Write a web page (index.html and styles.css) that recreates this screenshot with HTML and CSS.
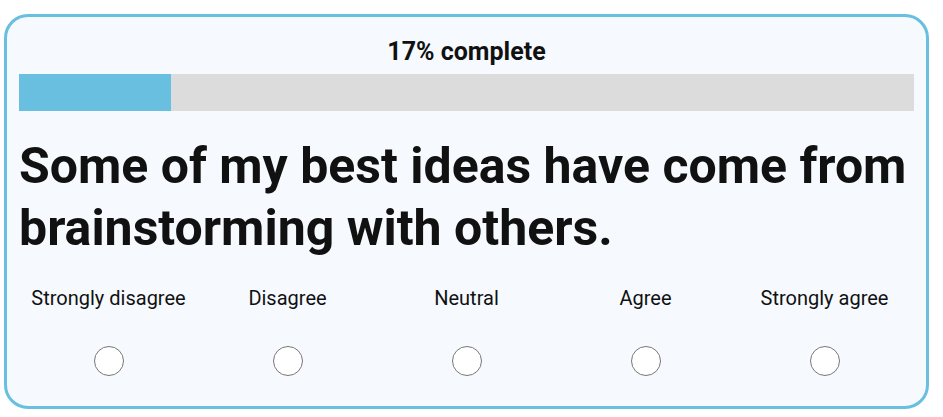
FILE: index.html
```html
<!DOCTYPE html>
<html lang="en">
<head>
  <meta charset="UTF-8">
  <meta name="viewport" content="width=device-width, initial-scale=1.0">
  <title>Survey</title>
  <link rel="stylesheet" href="styles.css">
</head>
<body>
  <div class="page">
    <div class="card">
      <!-- Progress -->
      <div class="progress-label">17% complete</div>
      <div class="progress">
        <div class="progress-fill" style="width: 17%"></div>
      </div>

      <!-- Question -->
      <h1 class="question">Some of my best ideas have come from brainstorming with others.</h1>

      <!-- Answers -->
      <div class="scale">
        <label class="option">
          <span>Strongly disagree</span>
          <input type="radio" name="answer" value="1">
        </label>
        <label class="option">
          <span>Disagree</span>
          <input type="radio" name="answer" value="2">
        </label>
        <label class="option">
          <span>Neutral</span>
          <input type="radio" name="answer" value="3">
        </label>
        <label class="option">
          <span>Agree</span>
          <input type="radio" name="answer" value="4">
        </label>
        <label class="option">
          <span>Strongly agree</span>
          <input type="radio" name="answer" value="5">
        </label>
      </div>
    </div>
  </div>
</body>
</html>
```

FILE: styles.css
```css
body {
  font-family: Roboto, "Liberation Sans", sans-serif;
  background-color: #fff;
  color: #111;
  margin: 0;
  padding: 0;
}
.page {
  padding: 14px 14px 0 4px;
}
.card {
  background-color: #f6faff;
  border: 3px solid #69bfdf;
  border-radius: 24px;
  padding: 20px 12px 30px;
}
.progress-label {
  text-align: center;
  font-size: 25px;
  font-weight: 700;
  line-height: 30px;
  margin-bottom: 7px;
}
.progress {
  height: 37px;
  background-color: #dcdcdc;
}
.progress-fill {
  height: 100%;
  background-color: #69bfdf;
}
.question {
  font-size: 50px;
  font-weight: 700;
  line-height: 62px;
  margin: 24px 0 27px;
}
.scale {
  display: grid;
  grid-template-columns: repeat(5, 1fr);
}
.option {
  display: flex;
  flex-direction: column;
  align-items: center;
  font-size: 20px;
  line-height: 24px;
}
.option input[type="radio"] {
  appearance: none;
  width: 30px;
  height: 30px;
  margin: 36px 0 0;
  border: 1px solid #777;
  border-radius: 50%;
  background-color: #fff;
  cursor: pointer;
}
.option input[type="radio"]:checked {
  background-color: #69bfdf;
}
```
